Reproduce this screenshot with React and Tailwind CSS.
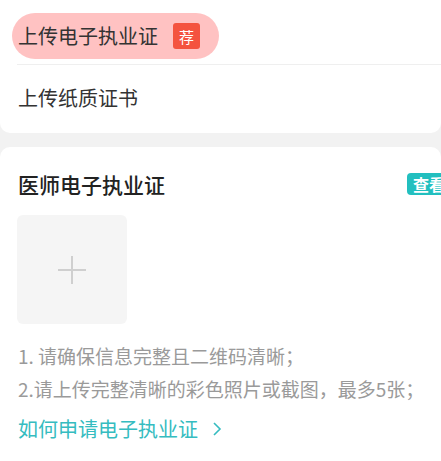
import React from 'react';

const font = { fontFamily: '"Noto Sans CJK SC", "Noto Sans", sans-serif' };

const App = () => {
  return (
    <div className="w-[441px] h-[461px] overflow-hidden bg-[#f2f2f2]" style={font}>
      {/* Upload type options */}
      <div className="bg-white rounded-b-[10px] h-[133px] pt-[13px]">
        <div className="ml-[12px] w-[207px] h-[46px] rounded-full bg-[#ffc2c2] flex items-center pl-[6px]">
          <span className="text-[20px] leading-none text-[#333]">上传电子执业证</span>
          <span className="ml-[15px] w-[27px] h-[26px] rounded-[3px] bg-[#f4533f] text-white text-[15px] flex items-center justify-center leading-none">
            荐
          </span>
        </div>
        <div className="ml-[17px] mt-[5px] border-t border-[#efefef]" />
        <div className="pl-[18px] h-[66px] flex items-center text-[20px] leading-none text-[#333]">
          上传纸质证书
        </div>
      </div>

      {/* Certificate card */}
      <div className="mt-[14px] bg-white rounded-t-[10px] h-[314px] pt-[26px]">
        <div className="flex items-center pl-[18px]">
          <h2 className="text-[21px] leading-none font-medium text-[#222]">医师电子执业证</h2>
          <span className="ml-auto -mr-[10px] h-[22px] px-[6px] rounded-[4px] bg-[#22bfbf] text-white text-[16px] font-bold leading-none flex items-center">
            查看
          </span>
        </div>

        <div className="ml-[17px] mt-[20px] w-[110px] h-[109px] rounded-[6px] bg-[#f5f5f5] flex items-center justify-center">
          <svg width="30" height="30" viewBox="0 0 30 30" fill="none" stroke="#cfcfcf" strokeWidth="2">
            <path d="M15 1v28M1 15h28" />
          </svg>
        </div>

        <div className="pl-[18px] mt-[15px] text-[19px] leading-[33px] text-[#9a9a9a]">
          <p>1. 请确保信息完整且二维码清晰；</p>
          <p>2.请上传完整清晰的彩色照片或截图，最多5张；</p>
        </div>

        <div className="pl-[18px] mt-[14px] flex items-center text-[20px] leading-none text-[#35bcc0]">
          如何申请电子执业证
          <svg className="ml-[14px]" width="10" height="16" viewBox="0 0 10 16" fill="none" stroke="#35bcc0" strokeWidth="1.6">
            <path d="M2 2l6 6-6 6" />
          </svg>
        </div>
      </div>
    </div>
  );
};

export default App;
